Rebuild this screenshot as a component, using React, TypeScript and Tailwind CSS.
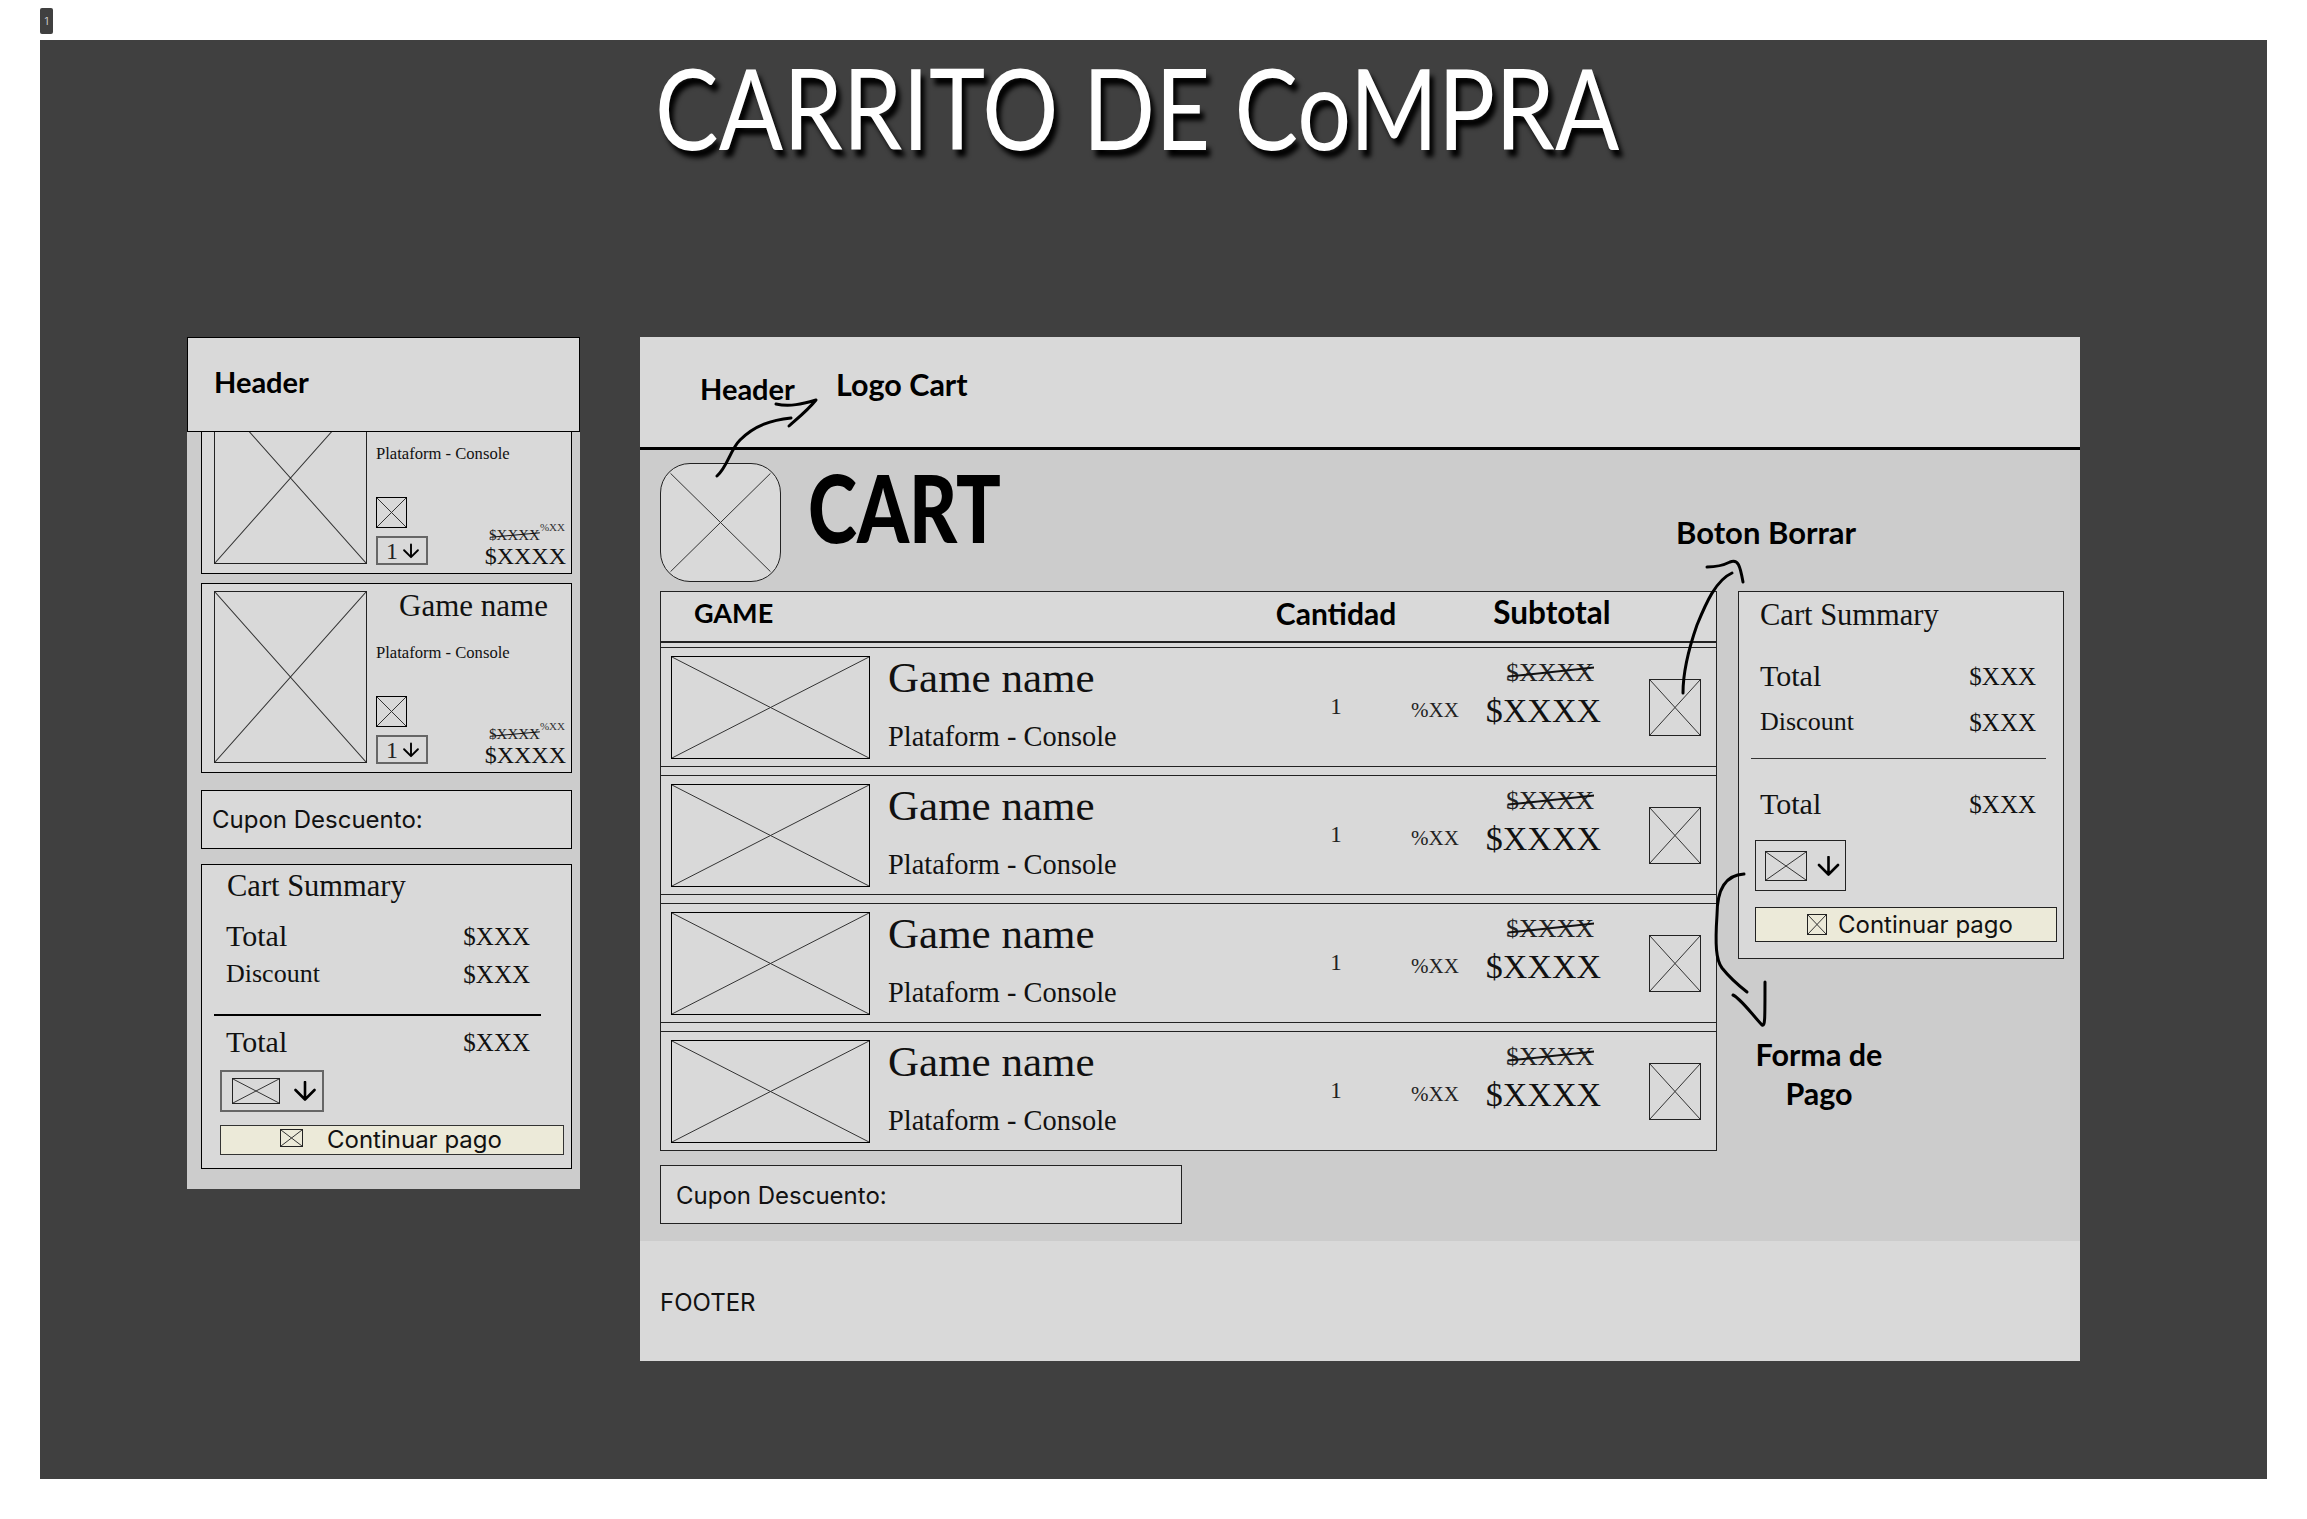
import clsx from "clsx"

const serif = "font-['Liberation_Serif',serif]"
const inter = "font-['Inter',sans-serif]"
const hand = "font-['Lato',sans-serif] font-bold"

function Crossed({ className }: { className: string }) {
  return (
    <div className={clsx("border border-[#222] shrink-0", className)}>
      <svg viewBox="0 0 100 100" preserveAspectRatio="none" className="block w-full h-full">
        <path d="M0 0 L100 100 M100 0 L0 100" stroke="#333" strokeWidth="1" vectorEffect="non-scaling-stroke" fill="none" />
      </svg>
    </div>
  )
}

function Down({ className }: { className: string }) {
  return (
    <svg viewBox="0 0 22 20" className={clsx("shrink-0", className)} fill="none" stroke="#000" strokeWidth="2.6" strokeLinecap="round" strokeLinejoin="round">
      <path d="M11 1 V18 M1.5 9 L11 18.5 L20.5 9" />
    </svg>
  )
}

function OldPrice({ className, thick }: { className: string; thick?: boolean }) {
  return (
    <span className={clsx("relative inline-block", serif, className)}>
      $XXXX
      <svg viewBox="0 0 100 100" preserveAspectRatio="none" className="absolute inset-0 w-full h-full">
        <path d="M2 62 L100 32" stroke="#111" strokeWidth={thick ? 2 : 1} vectorEffect="non-scaling-stroke" fill="none" />
      </svg>
    </span>
  )
}

function SummaryRow({ label, width, labelClass, className }: { label: string; width: string; labelClass: string; className: string }) {
  return (
    <div className={clsx("flex justify-between h-[30px] leading-[30px] text-[#111]", serif, width, className)}>
      <span className={labelClass}>{label}</span>
      <span className="text-[25px] pt-[1px]">$XXX</span>
    </div>
  )
}

function MobileCard({ className }: { className?: string }) {
  return (
    <div className={clsx("h-[190px] border border-black bg-[#d9d9d9] flex pl-[12px] pt-[7px]", className)}>
      <Crossed className="w-[153px] h-[172px]" />
      <div className="ml-[9px] flex-1 pr-[5px]">
        <div className={clsx("h-[30px] leading-[30px] pl-[23px] text-[31px] text-[#111] whitespace-nowrap", serif)}>Game name</div>
        <div className={clsx("mt-[22px] h-[20px] leading-[20px] text-[16.6px] text-[#111] whitespace-nowrap", serif)}>Plataform - Console</div>
        <div className="mt-[33px] flex justify-between items-end">
          <div>
            <Crossed className="w-[31px] h-[31px] border-black" />
            <div className="mt-[8px] w-[52px] h-[29px] border-2 border-[#666] flex items-center pl-[8px] gap-[5px]">
              <span className={clsx("text-[24px] leading-none text-[#222]", serif)}>1</span>
              <Down className="w-[16px] h-[16px]" />
            </div>
          </div>
          <div className="flex flex-col items-end -mb-[4px]">
            <div className="flex items-start pr-[1px]">
              <OldPrice className="text-[15px] leading-[15px] mt-[6px] text-[#222]" />
              <span className={clsx("text-[11px] leading-[11px] text-[#333]", serif)}>%XX</span>
            </div>
            <span className={clsx("text-[24px] leading-[26px] text-[#111]", serif)}>$XXXX</span>
          </div>
        </div>
      </div>
    </div>
  )
}

function MobileFrame() {
  return (
    <div className="w-[393px] h-[852px] bg-[#cccccc] shrink-0">
      <div className="relative z-10 h-[95px] bg-[#d9d9d9] border border-black pl-[26px] pt-[27px]">
        <span className={clsx("text-[29px] leading-[34px] text-black", hand)}>Header</span>
      </div>
      <div className="pl-[14px] pr-[8px] -mt-[48px]">
        <MobileCard />
        <MobileCard className="mt-[9px]" />
        <div className={clsx("mt-[17px] h-[59px] border border-black bg-[#d9d9d9] flex items-center pl-[10px] text-[24px] text-[#111]", inter)}>Cupon Descuento:</div>
        <div className="mt-[15px] h-[305px] border border-black bg-[#d9d9d9]">
          <div className={clsx("mt-[6px] ml-[25px] h-[30px] leading-[30px] text-[30.5px] text-[#111]", serif)}>Cart Summary</div>
          <SummaryRow label="Total" width="w-[304px]" labelClass="text-[30px]" className="mt-[20px] ml-[24px]" />
          <SummaryRow label="Discount" width="w-[304px]" labelClass="text-[26px]" className="mt-[8px] ml-[24px]" />
          <div className="mt-[25px] ml-[12px] w-[327px] h-[1.5px] bg-black" />
          <SummaryRow label="Total" width="w-[304px]" labelClass="text-[30px]" className="mt-[11px] ml-[24px]" />
          <div className="mt-[13px] ml-[18px] w-[104px] h-[42px] border-2 border-[#666] flex items-center pl-[10px] gap-[14px]">
            <Crossed className="w-[48px] h-[26px]" />
            <Down className="w-[22px] h-[20px]" />
          </div>
          <div className={clsx("mt-[13px] ml-[18px] w-[344px] h-[30px] bg-[#ecead9] border border-[#333] flex items-center pl-[59px] gap-[24px] text-[24px] text-[#111]", inter)}>
            <Crossed className="w-[23px] h-[18px] -mt-[4px]" />
            <span>Continuar pago</span>
          </div>
        </div>
      </div>
    </div>
  )
}

function DesktopRow() {
  return (
    <div className="h-[120px] border-y border-[#222] flex items-center pl-[10px]">
      <Crossed className="w-[199px] h-[103px] border-black" />
      <div className={clsx("ml-[18px] w-[407px] text-[#111] whitespace-nowrap", serif)}>
        <div className="h-[44px] leading-[44px] text-[43px] -mt-[6px]">Game name</div>
        <div className="mt-[21px] h-[32px] leading-[32px] text-[28.4px]">Plataform - Console</div>
      </div>
      <div className={clsx("w-[82px] text-center text-[23px] text-[#222]", serif)}>1</div>
      <div className={clsx("ml-[34px] w-[48px] pt-[7px] text-[21px] whitespace-nowrap text-[#222]", serif)}>%XX</div>
      <div className="ml-[25px] w-[117px] flex flex-col items-end -mt-[27px]">
        <OldPrice className="text-[26px] leading-[30px] mr-[7px] text-[#222]" thick />
        <span className={clsx("mt-[4px] text-[34px] leading-[38px] text-[#111] whitespace-nowrap", serif)}>$XXXX</span>
      </div>
      <Crossed className="ml-[48px] w-[52px] h-[57px]" />
    </div>
  )
}

function DesktopFrame() {
  return (
    <div className="relative w-[1440px] h-[1024px] bg-[#d9d9d9] shrink-0">
      <div className="h-[113px] border-b-[3px] border-black" />
      <span className={clsx("absolute left-[60px] top-[35px] text-[29px] leading-[34px] text-black", hand)}>Header</span>
      <span className={clsx("absolute left-[196px] top-[30px] text-[30.5px] leading-[34px] text-black whitespace-nowrap", hand)}>Logo Cart</span>
      <span className={clsx("absolute left-[1036px] top-[178px] text-[31px] leading-[34px] text-black whitespace-nowrap", hand)}>Boton Borrar</span>
      <div className={clsx("absolute left-[1109px] top-[698px] w-[140px] text-center text-[30.5px] leading-[39px] text-black", hand)}>
        Forma de
        <br />
        Pago
      </div>
      <div className="h-[791px] bg-[#cccccc] pl-[20px] pt-[13px]">
        <div className="h-[119px] flex">
          <div className="w-[121px] h-[119px] border border-[#222] rounded-[30px] bg-[#d9d9d9] overflow-hidden">
            <svg viewBox="0 0 100 100" preserveAspectRatio="none" className="block w-full h-full">
              <path d="M8 8 L92 92 M92 8 L8 92" stroke="#333" strokeWidth="1" vectorEffect="non-scaling-stroke" fill="none" />
            </svg>
          </div>
          <span className="ml-[27px] mt-[-3px] inline-block origin-left scale-x-[0.79] text-[94px] leading-[94px] font-black text-black font-['Lato',sans-serif]">CART</span>
        </div>
        <div className="mt-[9px] flex items-start">
          <div className="w-[1057px]">
            <div className="h-[560px] border border-[#222] bg-[#d9d9d9]">
              <div className="h-[51px] border-b-2 border-[#222] flex items-center pb-[7px]">
                <span className={clsx("ml-[33px] w-[562px] text-[27px] text-black", hand)}>GAME</span>
                <span className={clsx("w-[160px] text-center text-[30px] text-black", hand)}>Cantidad</span>
                <span className={clsx("ml-[56px] w-[160px] text-center text-[31.5px] text-black", hand)}>Subtotal</span>
              </div>
              <div className="mt-[4px] flex flex-col gap-[8px]">
                <DesktopRow />
                <DesktopRow />
                <DesktopRow />
                <DesktopRow />
              </div>
            </div>
            <div className={clsx("mt-[14px] w-[522px] h-[59px] border border-[#222] bg-[#d9d9d9] flex items-center pl-[15px] pt-[3px] text-[24px] text-[#111]", inter)}>Cupon Descuento:</div>
          </div>
          <div className="ml-[21px] w-[326px] h-[368px] border border-[#222] bg-[#d9d9d9]">
            <div className={clsx("mt-[8px] ml-[21px] h-[30px] leading-[30px] text-[30.5px] text-[#111]", serif)}>Cart Summary</div>
            <SummaryRow label="Total" width="w-[276px]" labelClass="text-[30px]" className="mt-[31px] ml-[21px]" />
            <SummaryRow label="Discount" width="w-[276px]" labelClass="text-[26px]" className="mt-[16px] ml-[21px]" />
            <div className="mt-[21px] ml-[12px] w-[295px] h-[1px] bg-[#333]" />
            <SummaryRow label="Total" width="w-[276px]" labelClass="text-[30px]" className="mt-[30px] ml-[21px]" />
            <div className="mt-[21px] ml-[16px] w-[91px] h-[51px] border border-[#222] flex items-center pl-[9px] gap-[10px]">
              <Crossed className="w-[42px] h-[30px]" />
              <Down className="w-[23px] h-[20px]" />
            </div>
            <div className={clsx("mt-[16px] ml-[16px] w-[302px] h-[35px] bg-[#ecead9] border border-[#222] flex items-center pl-[51px] gap-[11px] text-[24px] text-[#111]", inter)}>
              <Crossed className="w-[20px] h-[21px]" />
              <span>Continuar pago</span>
            </div>
          </div>
        </div>
      </div>
      <div className={clsx("h-[120px] flex items-center pl-[20px] pt-[4px] text-[24px] text-[#111]", inter)}>FOOTER</div>
    </div>
  )
}

function Arrows() {
  return (
    <svg viewBox="0 0 2307 1519" className="absolute left-0 top-0 w-[2307px] h-[1519px] pointer-events-none z-20" fill="none" stroke="#000" strokeWidth="3" strokeLinecap="round" strokeLinejoin="round">
      <path d="M717 476 C728 466 730 450 740 440 C755 425 772 420 791 418" />
      <path d="M776 404 C790 407 802 404 816 400 C808 410 798 418 789 426" />
      <path d="M1683 693 C1683 670 1690 645 1697 625 C1706 603 1716 580 1732 573" />
      <path d="M1707 567 C1716 567 1722 566 1730 562 C1738 559 1740 565 1743 582" />
      <path d="M1744 874 C1725 875 1717 890 1717 915 C1715 945 1716 960 1722 968 C1730 978 1738 985 1747 992" />
      <path d="M1733 995 C1740 998 1750 1012 1762 1025 C1765 1026 1765 1022 1765 982" />
    </svg>
  )
}

export default function App() {
  return (
    <div className="relative w-[2307px] h-[1519px] bg-white overflow-hidden pt-[8px] pl-[40px]">
      <div className={clsx("w-[13px] h-[26px] bg-[#404040] rounded-[2px] text-[#ccc] text-[10px] leading-[26px] text-center", inter)}>1</div>
      <div className="mt-[6px] w-[2227px] h-[1439px] bg-[#404040]">
        <div className="h-[297px] pr-[32px] pt-[2px] text-center">
          <span className="inline-block scale-x-[0.85] font-['Lato',sans-serif] font-normal text-[112px] leading-[130px] text-white [text-shadow:5px_7px_6px_#000] whitespace-nowrap">CARRITO DE CoMPRA</span>
        </div>
        <div className="flex pl-[147px] gap-[60px] items-start">
          <MobileFrame />
          <DesktopFrame />
        </div>
      </div>
      <Arrows />
    </div>
  )
}
